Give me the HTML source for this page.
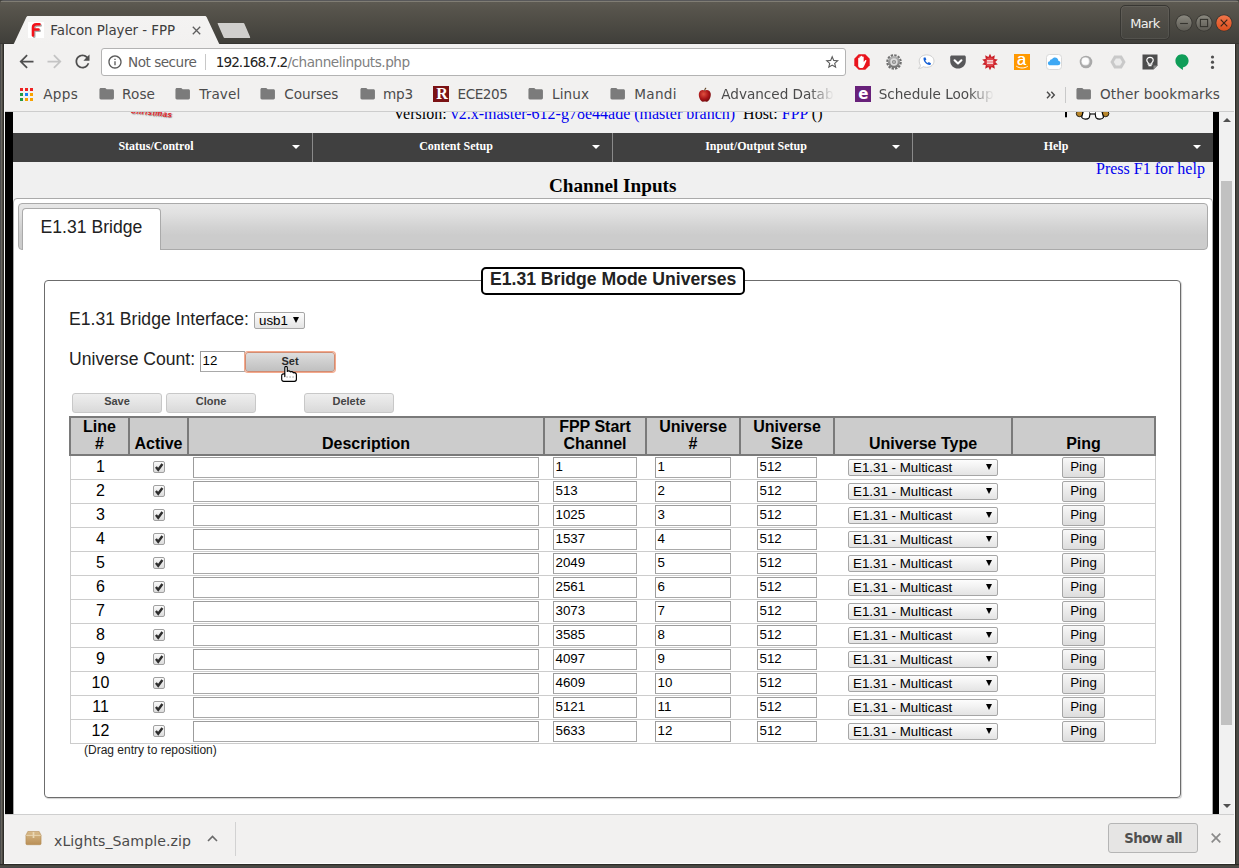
<!DOCTYPE html>
<html lang="en"><head><meta charset="utf-8"><title>Falcon Player - FPP</title>
<style>
*{box-sizing:border-box;margin:0;padding:0}
html,body{width:1239px;height:868px;overflow:hidden;background:#403f3a}
body{position:relative;font-family:'Liberation Sans',Arial,sans-serif}
.a{position:absolute}
.t{position:absolute;white-space:pre;line-height:1}
.ui{font-family:'DejaVu Sans','Liberation Sans',sans-serif;font-size:13.3px;color:#4a4a4a}
#titlebar{left:0;top:0;width:1239px;height:44px;background:linear-gradient(#58585a 0,#58585a 1px,#807d74 1px,#807d74 2px,#5d5a52 2px,#57544c 20%,#403f3a 97%,#2f2e2b 100%);border-radius:4px 4px 0 0}
#toolbar{left:4px;top:44px;width:1231px;height:68px;background:#f2f1f0}
#tline{left:4px;top:111px;width:1230px;height:1px;background:#cdcdcd}
#lstrip{left:4px;top:44px;width:1px;height:820px;background:#f6f6f5}
#rstrip{left:1234px;top:44px;width:1px;height:820px;background:#fbfbfb}
#bstrip{left:4px;top:863px;width:1231px;height:1px;background:#fdfdfd}
#fl{left:0;top:44px;width:4px;height:824px;background:linear-gradient(90deg,#4b4b4b 0,#4b4b4b 1px,#67655e 1px,#67655e 2px,#4a4842 2px,#4a4842 3px,#2e2d29 3px)}
#fr{left:1235px;top:44px;width:4px;height:824px;background:linear-gradient(90deg,#2b2a26 0,#2b2a26 1px,#45443e 1px,#45443e 2px,#4d4b44 2px,#4d4b44 3px,#454545 3px)}
#fb{left:0;top:864px;width:1239px;height:4px;background:linear-gradient(#2b2a26 0,#2b2a26 1px,#45443e 1px,#45443e 2px,#4d4b44 2px,#4d4b44 3px,#464646 3px)}
.blk{position:absolute;top:0;height:703px;background:#000}
#omni{left:101px;top:48px;width:745px;height:28px;background:#fff;border:1px solid #b3b3b3;border-radius:3px}
#view{left:5px;top:111px;width:1214px;height:703px;background:#000;overflow:hidden}
#sb{left:1219px;top:112px;width:15px;height:702px;background:#f1f1f1}
#shelf{left:4px;top:814px;width:1231px;height:49px;background:#f2f1f0;border-top:1px solid #cfcfcf}
#col{left:8px;top:0;width:1200px;height:703px;background:#f0f0f0}
#nav{left:8px;top:22px;width:1200px;height:29px;background:#404040}
.navi{position:absolute;top:-1px;height:29px;width:300px;color:#fff;font:bold 12px/29px 'Liberation Serif','Times New Roman',serif;text-align:center}
.navi i{position:absolute;right:13px;top:13px;width:0;height:0;border:4px solid transparent;border-top:4px solid #fff;border-bottom:0}
.navsep{position:absolute;top:0;width:1px;height:29px;background:#8a8a8a}
#tabs{left:8px;top:87px;width:1200px;height:700px;background:#fff;border:1px solid #aaa;border-radius:4px}
#tabnav{left:13px;top:92px;width:1190px;height:47px;background:linear-gradient(#e7e7e7 0,#e1e1e1 20%,#d3d3d3 50%,#cccccc 70%,#cccccc 100%);border:1px solid #aaa;border-radius:4px}
#tab{left:17px;top:97px;width:139px;height:42px;background:#fff;border:1px solid #aaa;border-bottom:0;border-radius:4px 4px 0 0}
#fs{left:39px;top:169px;width:1137px;height:518px;border:1px solid #6c6c6c;border-radius:4px;box-shadow:1px 1px 1px rgba(0,0,0,.18)}
#legend{left:476px;top:156px;width:264px;height:28px;background:#fff;border:2px solid #000;border-radius:5px}
.btn{position:absolute;height:20px;border:1px solid #c8c8c8;border-radius:3px;background:linear-gradient(#eeeeee,#e4e4e4 50%,#d9d9d9);color:#444;font:bold 11px/14px 'Liberation Sans',Arial,sans-serif;text-align:center}
.inp{position:absolute;height:21px;background:#fff;border:1px solid #a9a9a9;border-top-color:#9c9c9c;border-left-color:#9c9c9c;font:13.33px/18px 'Liberation Sans',Arial,sans-serif;color:#000;padding-left:1.5px;white-space:pre}
.sel{position:absolute;height:17px;border:1px solid #a6a6a6;border-radius:2px;background:linear-gradient(#fdfdfd,#e4e4e4);font:13.33px/15px 'Liberation Sans',Arial,sans-serif;color:#000;padding-left:4px;white-space:pre}
.sel i{position:absolute;right:5px;top:4px;width:0;height:0;border:3.5px solid transparent;border-top:6px solid #000;border-bottom:0}
.ping{position:absolute;height:21px;width:43px;border:1px solid #a6a6a6;border-radius:2px;background:linear-gradient(#f8f8f8,#dddddd);font:13.33px/17px 'Liberation Sans',Arial,sans-serif;color:#000;text-align:center}
.cb{position:absolute;width:12px;height:12px;border:1px solid #a0a0a0;border-radius:2px;background:linear-gradient(#fafafa,#dcdcdc)}
.row{position:absolute;left:65px;width:1086px;height:24px;border-bottom:1px solid #ccc;border-left:1px solid #ccc;border-right:1px solid #ccc}
.num{position:absolute;left:0;width:59px;top:0;text-align:center;font:16px/22px 'Liberation Sans',Arial,sans-serif;color:#000}
#th{left:64px;top:305px;width:1087px;height:40px;background:#ccc;border:2px solid #7a7a7a}
.th{position:absolute;top:0;height:36px;border-left:2px solid #7a7a7a;font:bold 16px/17px 'Liberation Sans',Arial,sans-serif;color:#000;text-align:center;display:flex;align-items:flex-end;justify-content:center;padding-bottom:2px}

.ic{position:absolute;overflow:visible}
</style></head>
<body>
<div class="a" id="titlebar"></div>
<div class="a" id="toolbar"></div>
<div class="a" id="omni"></div>
<div class="a" id="view">
<div class="a" id="col"></div>
<div class="a" id="nav">
<div class="navi" style="left:0px"><span style="position:relative;left:-7px">Status/Control</span><i style="right:13px"></i></div>
<div class="navi" style="left:300px"><span style="position:relative;left:-7px">Content Setup</span><i style="right:13px"></i></div>
<div class="navsep" style="left:299px"></div>
<div class="navi" style="left:600px"><span style="position:relative;left:-7px">Input/Output Setup</span><i style="right:13px"></i></div>
<div class="navsep" style="left:599px"></div>
<div class="navi" style="left:900px"><span style="position:relative;left:-7px">Help</span><i style="right:12px"></i></div>
<div class="navsep" style="left:899px"></div>
</div>
<div class="t" style="left:544px;top:64px;font:bold 19.2px/22px 'Liberation Serif','Times New Roman',serif;color:#000">Channel Inputs</div>
<div class="t" style="left:1091px;top:49px;font:16px/18px 'Liberation Serif','Times New Roman',serif;color:#0000ee">Press F1 for help</div>
<div class="t" style="left:124.5px;top:-5.5px;font:italic bold 8px/10px 'Liberation Sans',Arial,sans-serif;letter-spacing:.3px;color:#e3191f;text-shadow:.8px .8px 1px rgba(90,90,90,.7);transform:rotate(6deg);transform-origin:0 100%">Christmas</div>
<svg class="a" style="left:1055px;top:0" width="55" height="12" viewBox="0 0 55 12"><rect x="5" y="0" width="2" height="6.3" fill="#000"/><ellipse cx="19.6" cy="2.6" rx="3.3" ry="3.1" fill="#b8862b" stroke="#000" stroke-width=".8"/><ellipse cx="45.6" cy="2.6" rx="3.3" ry="3.1" fill="#b8862b" stroke="#000" stroke-width=".8"/><path d="M23.6 -1 C22.8 3 21.5 5.5 21.8 6.6 C23 8.7 27.5 8.6 29 6.8 C30.2 5.2 30 2 30 -1 Z" fill="#fff" stroke="#000" stroke-width="1.1"/><path d="M41.6 -1 C42.4 3 43.7 5.5 43.4 6.6 C42.2 8.7 37.7 8.6 36.2 6.8 C35 5.2 35.2 2 35.2 -1 Z" fill="#fff" stroke="#000" stroke-width="1.1"/><rect x="30" y="0" width="5.2" height="2.4" fill="#fff"/><path d="M30 3 L35.2 3" stroke="#000" stroke-width="1.1"/></svg>
<div class="t" style="left:388.3px;top:-6.2px;font:16px/18px 'Liberation Serif','Times New Roman',serif;color:#000">Version: <span style="color:#0000ee">v2.x-master-612-g78e44ade (master branch)</span>  Host: <span style="color:#0000ee">FPP</span> ()</div>
<div class="a" id="tabs"></div>
<div class="a" id="tabnav"></div>
<div class="a" id="tab"></div>
<div class="blk" style="left:0;width:8px"></div><div class="blk" style="left:1208px;width:6px"></div>
<div class="t" style="left:35.6px;top:105.6px;font:17.6px/20px 'Liberation Sans',Arial,sans-serif;color:#212121">E1.31 Bridge</div>
<div class="a" id="fs"></div>
<div class="a" id="legend"></div>
<div class="t" style="left:485px;top:158px;font:bold 17.6px/20px 'Liberation Sans',Arial,sans-serif;color:#222">E1.31 Bridge Mode Universes</div>
<div class="t" style="left:64px;top:198px;font:17.6px/20px 'Liberation Sans',Arial,sans-serif;color:#222">E1.31 Bridge Interface:</div>
<div class="sel" style="left:249px;top:201px;width:51px">usb1<i></i></div>
<div class="t" style="left:64px;top:238px;font:17.6px/20px 'Liberation Sans',Arial,sans-serif;color:#222">Universe Count:</div>
<div class="inp" style="left:195px;top:240px;width:45px">12</div>
<div class="btn" style="left:240px;top:241px;width:90px;height:20px;border:1px solid #d18c72;box-shadow:0 0 0 1px #f4a98c;background:linear-gradient(#dedede,#cecece 50%,#c0c0c0);color:#2a2a2a;line-height:17px">Set</div>
<svg class="a" style="left:276px;top:255px" width="17" height="17" viewBox="0 0 17 17"><path d="M3.8 10.6 L3.8 1.8 C3.8 -0.1 6.3 -0.1 6.3 1.8 L6.3 5.4 C7.1 4.5 8.8 4.6 9.3 5.9 C10.1 5.3 11.8 5.5 12.3 6.8 C13.3 6.3 15.4 6.8 15.4 8.8 L15.4 13.3 C15.4 14.6 14.6 15.3 13.4 15.3 L2.7 15.3 C1.5 15.3 0.7 14.6 0.7 13.3 L0.7 9.4 C0.7 8.1 2 7.7 3.8 8 Z" fill="#fff" stroke="#000" stroke-width="1.15" stroke-linejoin="round"/><path d="M5.2 11 L7 11 M8.2 11 L10 11 M11.2 11 L13 11" stroke="#8a8a8a" stroke-width=".7"/></svg>
<div class="btn" style="left:67px;top:282px;width:90px">Save</div>
<div class="btn" style="left:161px;top:282px;width:90px">Clone</div>
<div class="btn" style="left:299px;top:282px;width:90px">Delete</div>
<div class="a" id="th">
<div class="th" style="left:0px;width:57px;border-left:0;"><span>Line<br>#</span></div>
<div class="th" style="left:57px;width:59px;"><span>Active</span></div>
<div class="th" style="left:116px;width:356px;"><span>Description</span></div>
<div class="th" style="left:472px;width:102px;"><span>FPP Start<br>Channel</span></div>
<div class="th" style="left:574px;width:94px;"><span>Universe<br>#</span></div>
<div class="th" style="left:668px;width:94px;"><span>Universe<br>Size</span></div>
<div class="th" style="left:762px;width:178px;"><span>Universe Type</span></div>
<div class="th" style="left:940px;width:143px;"><span>Ping</span></div>
</div>
<div class="row" style="top:345px">
<div class="num">1</div>
<div class="cb" style="left:82px;top:5px"><svg width="10" height="10" viewBox="0 0 10 10" style="position:absolute;left:0;top:0"><path d="M1.9 5 L4.2 7.7 L8.4 2" fill="none" stroke="#2e2e2e" stroke-width="2.4"/></svg></div>
<div class="inp" style="left:122px;top:1px;width:346px"></div>
<div class="inp" style="left:482px;top:1px;width:84px">1</div>
<div class="inp" style="left:584px;top:1px;width:76px">1</div>
<div class="inp" style="left:686px;top:1px;width:60px">512</div>
<div class="sel" style="left:777px;top:3px;width:150px">E1.31 - Multicast<i></i></div>
<div class="ping" style="left:991px;top:1px">Ping</div>
</div>
<div class="row" style="top:369px">
<div class="num">2</div>
<div class="cb" style="left:82px;top:5px"><svg width="10" height="10" viewBox="0 0 10 10" style="position:absolute;left:0;top:0"><path d="M1.9 5 L4.2 7.7 L8.4 2" fill="none" stroke="#2e2e2e" stroke-width="2.4"/></svg></div>
<div class="inp" style="left:122px;top:1px;width:346px"></div>
<div class="inp" style="left:482px;top:1px;width:84px">513</div>
<div class="inp" style="left:584px;top:1px;width:76px">2</div>
<div class="inp" style="left:686px;top:1px;width:60px">512</div>
<div class="sel" style="left:777px;top:3px;width:150px">E1.31 - Multicast<i></i></div>
<div class="ping" style="left:991px;top:1px">Ping</div>
</div>
<div class="row" style="top:393px">
<div class="num">3</div>
<div class="cb" style="left:82px;top:5px"><svg width="10" height="10" viewBox="0 0 10 10" style="position:absolute;left:0;top:0"><path d="M1.9 5 L4.2 7.7 L8.4 2" fill="none" stroke="#2e2e2e" stroke-width="2.4"/></svg></div>
<div class="inp" style="left:122px;top:1px;width:346px"></div>
<div class="inp" style="left:482px;top:1px;width:84px">1025</div>
<div class="inp" style="left:584px;top:1px;width:76px">3</div>
<div class="inp" style="left:686px;top:1px;width:60px">512</div>
<div class="sel" style="left:777px;top:3px;width:150px">E1.31 - Multicast<i></i></div>
<div class="ping" style="left:991px;top:1px">Ping</div>
</div>
<div class="row" style="top:417px">
<div class="num">4</div>
<div class="cb" style="left:82px;top:5px"><svg width="10" height="10" viewBox="0 0 10 10" style="position:absolute;left:0;top:0"><path d="M1.9 5 L4.2 7.7 L8.4 2" fill="none" stroke="#2e2e2e" stroke-width="2.4"/></svg></div>
<div class="inp" style="left:122px;top:1px;width:346px"></div>
<div class="inp" style="left:482px;top:1px;width:84px">1537</div>
<div class="inp" style="left:584px;top:1px;width:76px">4</div>
<div class="inp" style="left:686px;top:1px;width:60px">512</div>
<div class="sel" style="left:777px;top:3px;width:150px">E1.31 - Multicast<i></i></div>
<div class="ping" style="left:991px;top:1px">Ping</div>
</div>
<div class="row" style="top:441px">
<div class="num">5</div>
<div class="cb" style="left:82px;top:5px"><svg width="10" height="10" viewBox="0 0 10 10" style="position:absolute;left:0;top:0"><path d="M1.9 5 L4.2 7.7 L8.4 2" fill="none" stroke="#2e2e2e" stroke-width="2.4"/></svg></div>
<div class="inp" style="left:122px;top:1px;width:346px"></div>
<div class="inp" style="left:482px;top:1px;width:84px">2049</div>
<div class="inp" style="left:584px;top:1px;width:76px">5</div>
<div class="inp" style="left:686px;top:1px;width:60px">512</div>
<div class="sel" style="left:777px;top:3px;width:150px">E1.31 - Multicast<i></i></div>
<div class="ping" style="left:991px;top:1px">Ping</div>
</div>
<div class="row" style="top:465px">
<div class="num">6</div>
<div class="cb" style="left:82px;top:5px"><svg width="10" height="10" viewBox="0 0 10 10" style="position:absolute;left:0;top:0"><path d="M1.9 5 L4.2 7.7 L8.4 2" fill="none" stroke="#2e2e2e" stroke-width="2.4"/></svg></div>
<div class="inp" style="left:122px;top:1px;width:346px"></div>
<div class="inp" style="left:482px;top:1px;width:84px">2561</div>
<div class="inp" style="left:584px;top:1px;width:76px">6</div>
<div class="inp" style="left:686px;top:1px;width:60px">512</div>
<div class="sel" style="left:777px;top:3px;width:150px">E1.31 - Multicast<i></i></div>
<div class="ping" style="left:991px;top:1px">Ping</div>
</div>
<div class="row" style="top:489px">
<div class="num">7</div>
<div class="cb" style="left:82px;top:5px"><svg width="10" height="10" viewBox="0 0 10 10" style="position:absolute;left:0;top:0"><path d="M1.9 5 L4.2 7.7 L8.4 2" fill="none" stroke="#2e2e2e" stroke-width="2.4"/></svg></div>
<div class="inp" style="left:122px;top:1px;width:346px"></div>
<div class="inp" style="left:482px;top:1px;width:84px">3073</div>
<div class="inp" style="left:584px;top:1px;width:76px">7</div>
<div class="inp" style="left:686px;top:1px;width:60px">512</div>
<div class="sel" style="left:777px;top:3px;width:150px">E1.31 - Multicast<i></i></div>
<div class="ping" style="left:991px;top:1px">Ping</div>
</div>
<div class="row" style="top:513px">
<div class="num">8</div>
<div class="cb" style="left:82px;top:5px"><svg width="10" height="10" viewBox="0 0 10 10" style="position:absolute;left:0;top:0"><path d="M1.9 5 L4.2 7.7 L8.4 2" fill="none" stroke="#2e2e2e" stroke-width="2.4"/></svg></div>
<div class="inp" style="left:122px;top:1px;width:346px"></div>
<div class="inp" style="left:482px;top:1px;width:84px">3585</div>
<div class="inp" style="left:584px;top:1px;width:76px">8</div>
<div class="inp" style="left:686px;top:1px;width:60px">512</div>
<div class="sel" style="left:777px;top:3px;width:150px">E1.31 - Multicast<i></i></div>
<div class="ping" style="left:991px;top:1px">Ping</div>
</div>
<div class="row" style="top:537px">
<div class="num">9</div>
<div class="cb" style="left:82px;top:5px"><svg width="10" height="10" viewBox="0 0 10 10" style="position:absolute;left:0;top:0"><path d="M1.9 5 L4.2 7.7 L8.4 2" fill="none" stroke="#2e2e2e" stroke-width="2.4"/></svg></div>
<div class="inp" style="left:122px;top:1px;width:346px"></div>
<div class="inp" style="left:482px;top:1px;width:84px">4097</div>
<div class="inp" style="left:584px;top:1px;width:76px">9</div>
<div class="inp" style="left:686px;top:1px;width:60px">512</div>
<div class="sel" style="left:777px;top:3px;width:150px">E1.31 - Multicast<i></i></div>
<div class="ping" style="left:991px;top:1px">Ping</div>
</div>
<div class="row" style="top:561px">
<div class="num">10</div>
<div class="cb" style="left:82px;top:5px"><svg width="10" height="10" viewBox="0 0 10 10" style="position:absolute;left:0;top:0"><path d="M1.9 5 L4.2 7.7 L8.4 2" fill="none" stroke="#2e2e2e" stroke-width="2.4"/></svg></div>
<div class="inp" style="left:122px;top:1px;width:346px"></div>
<div class="inp" style="left:482px;top:1px;width:84px">4609</div>
<div class="inp" style="left:584px;top:1px;width:76px">10</div>
<div class="inp" style="left:686px;top:1px;width:60px">512</div>
<div class="sel" style="left:777px;top:3px;width:150px">E1.31 - Multicast<i></i></div>
<div class="ping" style="left:991px;top:1px">Ping</div>
</div>
<div class="row" style="top:585px">
<div class="num">11</div>
<div class="cb" style="left:82px;top:5px"><svg width="10" height="10" viewBox="0 0 10 10" style="position:absolute;left:0;top:0"><path d="M1.9 5 L4.2 7.7 L8.4 2" fill="none" stroke="#2e2e2e" stroke-width="2.4"/></svg></div>
<div class="inp" style="left:122px;top:1px;width:346px"></div>
<div class="inp" style="left:482px;top:1px;width:84px">5121</div>
<div class="inp" style="left:584px;top:1px;width:76px">11</div>
<div class="inp" style="left:686px;top:1px;width:60px">512</div>
<div class="sel" style="left:777px;top:3px;width:150px">E1.31 - Multicast<i></i></div>
<div class="ping" style="left:991px;top:1px">Ping</div>
</div>
<div class="row" style="top:609px">
<div class="num">12</div>
<div class="cb" style="left:82px;top:5px"><svg width="10" height="10" viewBox="0 0 10 10" style="position:absolute;left:0;top:0"><path d="M1.9 5 L4.2 7.7 L8.4 2" fill="none" stroke="#2e2e2e" stroke-width="2.4"/></svg></div>
<div class="inp" style="left:122px;top:1px;width:346px"></div>
<div class="inp" style="left:482px;top:1px;width:84px">5633</div>
<div class="inp" style="left:584px;top:1px;width:76px">12</div>
<div class="inp" style="left:686px;top:1px;width:60px">512</div>
<div class="sel" style="left:777px;top:3px;width:150px">E1.31 - Multicast<i></i></div>
<div class="ping" style="left:991px;top:1px">Ping</div>
</div>
<div class="t" style="left:79px;top:632px;font:12px/14px 'Liberation Sans',Arial,sans-serif;color:#222">(Drag entry to reposition)</div>
</div>
<div class="a" id="tline"></div>
<div class="a" id="sb"></div>
<div class="a" id="shelf"></div>
<div class="a" id="fl"></div><div class="a" id="fr"></div><div class="a" id="fb"></div><div class="a" id="lstrip"></div><div class="a" id="rstrip"></div><div class="a" id="bstrip"></div>
<svg class="ic" style="left:0px;top:0px;" width="1239" height="46" viewBox="0 0 1239 46"><defs><linearGradient id="tg" x1="0" y1="0" x2="0" y2="1"><stop offset="0" stop-color="#f4f3f2"/><stop offset="1" stop-color="#f2f1f0"/></linearGradient></defs><path d="M13 44.5 L14 43.6 L26.3 17.2 C26.8 16.3 27.3 16 28.3 16 L204.7 16 C205.7 16 206.2 16.3 206.7 17.2 L219 43.6 L220 44.5 Z" fill="url(#tg)"/><path d="M218.3 23 L243 23 C243.8 23 244.2 23.3 244.5 24 L250 36.8 C250.4 37.6 250.1 38 249.3 38 L225 38 C224.2 38 223.8 37.7 223.5 37 L217.8 24 C217.5 23.3 217.6 23 218.3 23 Z" fill="#d0cfcd"/></svg>
<div class="a" style="left:28px;top:22px;width:16px;height:16px;background:#fff"></div>
<svg class="ic" style="left:28px;top:22px;" width="16" height="16" viewBox="0 0 16 16"><path d="M5 13.5 L5 5.5 C5 3.3 6.3 2.3 8.3 2.3 L11.5 2.3 M5 7.5 L10.5 7.5" fill="none" stroke="#8a8a8a" stroke-width="2.6" stroke-linecap="round" transform="translate(1.2,1.2)" opacity=".7"/><path d="M5 13.5 L5 5.5 C5 3.3 6.3 2.3 8.3 2.3 L11.5 2.3 M5 7.5 L10.5 7.5" fill="none" stroke="#f4121a" stroke-width="2.6" stroke-linecap="round"/></svg>
<div class="t" style="left:50.3px;top:24.0px;font-family:'DejaVu Sans','Liberation Sans',sans-serif;font-size:13.4px;font-weight:400;letter-spacing:-0.045px;color:#3e3e3e;">Falcon Player - FPP</div>
<svg class="ic" style="left:192.4px;top:25.5px;" width="9" height="9" viewBox="0 0 9 9"><path d="M0.8 0.8 L8.2 8.2 M8.2 0.8 L0.8 8.2" stroke="#5e5e5e" stroke-width="1.3" fill="none"/></svg>
<div class="a" style="left:1120px;top:5px;width:50px;height:35px;border:1px solid #383733;border-radius:5px;background:linear-gradient(#57544d,#45443f);box-shadow:inset 0 0 0 1px rgba(255,255,255,.07)"></div>
<div class="t" style="left:1130.3px;top:17.1px;font-family:'DejaVu Sans','Liberation Sans',sans-serif;font-size:13px;font-weight:400;letter-spacing:-0.691px;color:#f1f1ef;">Mark</div>
<svg width="0" height="0" style="position:absolute"><defs><linearGradient id="wg" x1="0" y1="0" x2="0" y2="1"><stop offset="0" stop-color="#8a887f"/><stop offset="1" stop-color="#5d5b54"/></linearGradient><linearGradient id="wr" x1="0" y1="0" x2="0" y2="1"><stop offset="0" stop-color="#f0754a"/><stop offset="1" stop-color="#dc4f1e"/></linearGradient></defs></svg>
<svg class="ic" style="left:1175.2px;top:13.9px;" width="18" height="18" viewBox="-0.5 -0.5 18 18"><circle cx="8.5" cy="8.5" r="8.5" fill="#34332f"/><circle cx="8.5" cy="8.5" r="7.7" fill="url(#wg)"/><path d="M4.6 9 L12.4 9" stroke="#35342f" stroke-width="1.1"/></svg>
<svg class="ic" style="left:1195px;top:13.9px;" width="18" height="18" viewBox="-0.5 -0.5 18 18"><circle cx="8.5" cy="8.5" r="8.5" fill="#34332f"/><circle cx="8.5" cy="8.5" r="7.7" fill="url(#wg)"/><rect x="4.9" y="4.9" width="7.2" height="7.2" fill="none" stroke="#35342f" stroke-width="1.1"/></svg>
<svg class="ic" style="left:1215.2px;top:13.9px;" width="18" height="18" viewBox="-0.5 -0.5 18 18"><circle cx="8.5" cy="8.5" r="8.5" fill="#34332f"/><circle cx="8.5" cy="8.5" r="7.7" fill="url(#wr)"/><path d="M5.2 5.2 L11.8 11.8 M11.8 5.2 L5.2 11.8" stroke="#3a2418" stroke-width="1.2"/></svg>
<svg class="ic" style="left:16px;top:51.2px;" width="21" height="21" viewBox="0 0 24 24"><path d="M20 11H7.83l5.59-5.59L12 4l-8 8 8 8 1.41-1.41L7.83 13H20v-2z" fill="#4f4f4f"/></svg>
<svg class="ic" style="left:44px;top:51.2px;" width="21" height="21" viewBox="0 0 24 24"><path d="M12 4l-1.41 1.41L16.17 11H4v2h12.17l-5.58 5.59L12 20l8-8z" fill="#c4c4c4"/></svg>
<svg class="ic" style="left:72.2px;top:51.2px;" width="21" height="21" viewBox="0 0 24 24"><path d="M17.65 6.35C16.2 4.9 14.21 4 12 4c-4.42 0-7.99 3.58-7.99 8s3.57 8 7.99 8c3.73 0 6.84-2.55 7.73-6h-2.08c-.82 2.33-3.04 4-5.65 4-3.31 0-6-2.69-6-6s2.69-6 6-6c1.66 0 3.14.69 4.22 1.78L13 11h7V4l-2.35 2.35z" fill="#4f4f4f"/></svg>
<svg class="ic" style="left:107px;top:54px;" width="16" height="16" viewBox="0 0 24 24"><path d="M11 17h2v-6h-2v6zm1-15C6.48 2 2 6.48 2 12s4.48 10 10 10 10-4.48 10-10S17.52 2 12 2zm0 18c-4.41 0-8-3.59-8-8s3.59-8 8-8 8 3.59 8 8-3.59 8-8 8zM11 9h2V7h-2v2z" fill="#5a5a5a"/></svg>
<div class="t" style="left:128.0px;top:56.0px;font-family:'DejaVu Sans','Liberation Sans',sans-serif;font-size:13.6px;font-weight:400;letter-spacing:-0.493px;color:#5f5f5f;">Not secure</div>
<div class="a" style="left:205px;top:54px;width:1px;height:16px;background:#c8c8c8"></div>
<div class="t" style="left:215.8px;top:56.0px;font-family:'DejaVu Sans','Liberation Sans',sans-serif;font-size:13.6px;font-weight:400;letter-spacing:-0.978px;color:#222;">192.168.7.2</div>
<div class="t" style="left:287.4px;top:56.0px;font-family:'DejaVu Sans','Liberation Sans',sans-serif;font-size:13.6px;font-weight:400;letter-spacing:-0.462px;color:#808080;">/channelinputs.php</div>
<svg class="ic" style="left:824px;top:53.8px;" width="16.4" height="16.4" viewBox="0 0 24 24"><path d="M22 9.24l-7.19-.62L12 2 9.19 8.63 2 9.24l5.46 4.73L5.82 21 12 17.27 18.18 21l-1.63-7.03L22 9.24zM12 15.4l-3.76 2.27 1-4.28-3.32-2.88 4.38-.38L12 6.1l1.71 4.04 4.38.38-3.32 2.88 1 4.28L12 15.4z" fill="#5a5a5a"/></svg>
<svg class="ic" style="left:854px;top:54px;" width="16" height="16" viewBox="0 0 16 16"><path d="M4.7 0.3 L11.3 0.3 L15.7 4.7 L15.7 11.3 L11.3 15.7 L4.7 15.7 L0.3 11.3 L0.3 4.7 Z" fill="#e9141d"/><path d="M4.2 9 L4.2 4.4 C4.2 3.5 5.5 3.5 5.5 4.4 L5.5 3 C5.5 2.1 6.9 2.1 6.9 3 L6.9 2.5 C6.9 1.6 8.3 1.6 8.3 2.5 L8.3 3.1 C8.3 2.2 9.7 2.2 9.7 3.1 L9.7 8 L11 6.4 C11.7 5.7 12.8 6.4 12.3 7.3 L10 12.2 C9.5 13.4 8.8 14 7.8 14 L6.4 14 C5 14 4.2 13 4.2 11.6 Z" fill="#fff"/></svg>
<svg class="ic" style="left:886px;top:54px;" width="16" height="16" viewBox="0 0 16 16"><defs><linearGradient id="gg" x1="0" y1="0" x2="0" y2="1"><stop offset="0" stop-color="#b9b9b9"/><stop offset="1" stop-color="#6f6f6f"/></linearGradient></defs><circle cx="8" cy="8" r="6.6" fill="none" stroke="#6e6e6e" stroke-width="2.4" stroke-dasharray="2.3 1.16"/><circle cx="8" cy="8" r="6.1" fill="url(#gg)"/><circle cx="8" cy="8" r="3.7" fill="#dcdcdc"/><circle cx="8" cy="8" r="2.1" fill="#8d8d8d"/><circle cx="8" cy="8" r="1" fill="#bdbdbd"/></svg>
<svg class="ic" style="left:918px;top:54px;" width="16" height="16" viewBox="0 0 16 16"><path d="M8.6 0.9 C13 0.9 16 3.6 16 7.1 C16 10.6 13 13.3 8.6 13.3 C7.4 13.3 6.2 13.1 5.2 12.7 C4 13.9 2.4 14.4 0.5 14.3 C1.7 13.5 2.3 12.5 2.4 11.3 C1.6 10.1 1.2 8.7 1.2 7.1 C1.2 3.6 4.2 0.9 8.6 0.9 Z" fill="#fff" stroke="#c9c9c9" stroke-width=".9"/><path d="M5.6 3.8 L7.3 3.2 L8.4 5.6 L7.3 6.5 C7.8 7.6 8.6 8.5 9.8 9 L10.7 8 L13 9.2 L12.4 10.9 C8.9 11.7 4.8 7.5 5.6 3.8 Z" fill="#1560d6"/></svg>
<svg class="ic" style="left:950px;top:54px;" width="16" height="16" viewBox="0 0 16 16"><path d="M1.8 1.6 L14.2 1.6 C15.2 1.6 15.8 2.2 15.8 3.2 L15.8 7 C15.8 11.3 12.3 14.6 8 14.6 C3.7 14.6 0.2 11.3 0.2 7 L0.2 3.2 C0.2 2.2 0.8 1.6 1.8 1.6 Z" fill="#58585a"/><path d="M4.6 6.3 L8 9.5 L11.4 6.3" fill="none" stroke="#fff" stroke-width="2.1" stroke-linecap="round" stroke-linejoin="round"/></svg>
<svg class="ic" style="left:982px;top:54px;" width="16" height="16" viewBox="0 0 16 16"><polygon points="8.00,-0.20 9.61,3.05 12.82,1.37 12.21,4.94 15.80,5.47 13.20,8.00 15.80,10.53 12.21,11.06 12.82,14.63 9.61,12.95 8.00,16.20 6.39,12.95 3.18,14.63 3.79,11.06 0.20,10.53 2.80,8.00 0.20,5.47 3.79,4.94 3.18,1.37 6.39,3.05" fill="#c81e25"/><circle cx="8" cy="8" r="4.6" fill="#e0434a"/><path d="M5 6.9 L11 6.9 M5 9.1 L11 9.1" stroke="#fff" stroke-width="1.1"/></svg>
<div class="a" style="left:1014px;top:54px;width:16px;height:16px;background:#ff9900"></div>
<div class="t" style="left:1017.1px;top:50.6px;font-family:'Liberation Sans',sans-serif;font-weight:normal;font-size:16.5px;color:#fff;text-shadow:0 0 .4px #fff">a</div>
<svg class="ic" style="left:1014px;top:54px;" width="16" height="16" viewBox="0 0 16 16"><path d="M2.6 12.4 C6 14.6 10.4 14.5 13.4 12.5" fill="none" stroke="#fff" stroke-width="1" stroke-linecap="round"/></svg>
<svg class="ic" style="left:1046px;top:54px;" width="16" height="16" viewBox="0 0 16 16"><rect x="0.5" y="0.5" width="15" height="15" rx="3" fill="#fff" stroke="#d9d9d9"/><path d="M4.3 11.3 C2.8 11.3 1.9 10.3 1.9 9.2 C1.9 8.1 2.7 7.3 3.8 7.2 C3.9 5.9 4.9 5.1 6 5.3 C6.6 4.1 7.7 3.5 9 3.5 C10.9 3.5 12.3 4.9 12.3 6.8 C13.5 6.9 14.3 7.8 14.3 9 C14.3 10.3 13.3 11.3 12 11.3 Z" fill="#3ea8f4"/></svg>
<svg class="ic" style="left:1078px;top:54px;" width="16" height="16" viewBox="0 0 16 16"><circle cx="8" cy="8" r="6.3" fill="#a9a9a9"/><circle cx="7.5" cy="7.4" r="4.1" fill="#e4e4e4"/><circle cx="7.3" cy="7.2" r="3.4" fill="#fdfdfd"/></svg>
<svg class="ic" style="left:1110px;top:54px;" width="16" height="16" viewBox="0 0 16 16"><path d="M4.2 1.6 L11.8 1.6 L15.6 8 L11.8 14.4 L4.2 14.4 L0.4 8 Z" fill="#c9c9c9"/><path d="M5.9 4.4 L10.1 4.4 L12.2 8 L10.1 11.6 L5.9 11.6 L3.8 8 Z" fill="#ebebeb"/></svg>
<svg class="ic" style="left:1141.9px;top:54px;" width="16" height="16" viewBox="0 0 16 16"><path d="M0.5 0.5 L15.5 0.5 L15.5 11.5 L11.5 15.5 L0.5 15.5 Z" fill="#4d4d4d"/><path d="M15.5 11.5 L11.5 11.5 L11.5 15.5 Z" fill="#8a8a8a"/><path d="M8 3.3 C10 3.3 11.2 4.7 11.2 6.3 C11.2 7.5 10.6 8.2 9.8 8.9 L9.8 10.2 L6.2 10.2 L6.2 8.9 C5.4 8.2 4.8 7.5 4.8 6.3 C4.8 4.7 6 3.3 8 3.3 Z M6.4 11.6 L9.6 11.6" fill="none" stroke="#fff" stroke-width="1.2"/></svg>
<svg class="ic" style="left:1173.7px;top:54px;" width="16" height="16" viewBox="0 0 16 16"><path d="M8 0.2 C11.8 0.2 14.6 3.1 14.6 6.8 C14.6 10.4 11.8 13 8.9 13.4 L8.9 16 C7.4 15 5.9 13.9 4.8 12.9 C2.7 11.7 1.4 9.4 1.4 6.8 C1.4 3.1 4.2 0.2 8 0.2 Z" fill="#0f9d58"/></svg>
<svg class="ic" style="left:1210px;top:54px;" width="5" height="16" viewBox="0 0 5 16"><circle cx="2.5" cy="3" r="1.6" fill="#4f4f4f"/><circle cx="2.5" cy="8.2" r="1.6" fill="#4f4f4f"/><circle cx="2.5" cy="13.4" r="1.6" fill="#4f4f4f"/></svg>
<svg class="ic" style="left:20px;top:87.5px;" width="13" height="13" viewBox="0 0 13 13"><rect x="0" y="0" width="3" height="3" fill="#ee2222"/><rect x="5" y="0" width="3" height="3" fill="#ee2222"/><rect x="10" y="0" width="3" height="3" fill="#ee2222"/><rect x="0" y="5" width="3" height="3" fill="#229944"/><rect x="5" y="5" width="3" height="3" fill="#1a82f7"/><rect x="10" y="5" width="3" height="3" fill="#f7a200"/><rect x="0" y="10" width="3" height="3" fill="#229944"/><rect x="5" y="10" width="3" height="3" fill="#f7a200"/><rect x="10" y="10" width="3" height="3" fill="#f7a200"/></svg>
<div class="t" style="left:43.3px;top:88.0px;font-family:'DejaVu Sans','Liberation Sans',sans-serif;font-size:13.6px;font-weight:400;letter-spacing:0.265px;color:#4b4b4b;">Apps</div>
<svg class="ic" style="left:97.5px;top:85.2px;" width="17.4" height="17.4" viewBox="0 0 24 24"><path d="M10 4H4c-1.1 0-1.99.9-1.99 2L2 18c0 1.1.9 2 2 2h16c1.1 0 2-.9 2-2V8c0-1.1-.9-2-2-2h-8l-2-2z" fill="#7b7b7b"/></svg>
<div class="t" style="left:122.1px;top:88.0px;font-family:'DejaVu Sans','Liberation Sans',sans-serif;font-size:13.6px;font-weight:400;letter-spacing:0.098px;color:#4b4b4b;">Rose</div>
<svg class="ic" style="left:174.3px;top:85.2px;" width="17.4" height="17.4" viewBox="0 0 24 24"><path d="M10 4H4c-1.1 0-1.99.9-1.99 2L2 18c0 1.1.9 2 2 2h16c1.1 0 2-.9 2-2V8c0-1.1-.9-2-2-2h-8l-2-2z" fill="#7b7b7b"/></svg>
<div class="t" style="left:199.3px;top:88.0px;font-family:'DejaVu Sans','Liberation Sans',sans-serif;font-size:13.6px;font-weight:400;letter-spacing:0.096px;color:#4b4b4b;">Travel</div>
<svg class="ic" style="left:259.40000000000003px;top:85.2px;" width="17.4" height="17.4" viewBox="0 0 24 24"><path d="M10 4H4c-1.1 0-1.99.9-1.99 2L2 18c0 1.1.9 2 2 2h16c1.1 0 2-.9 2-2V8c0-1.1-.9-2-2-2h-8l-2-2z" fill="#7b7b7b"/></svg>
<div class="t" style="left:284.3px;top:88.0px;font-family:'DejaVu Sans','Liberation Sans',sans-serif;font-size:13.6px;font-weight:400;letter-spacing:-0.078px;color:#4b4b4b;">Courses</div>
<svg class="ic" style="left:358.5px;top:85.2px;" width="17.4" height="17.4" viewBox="0 0 24 24"><path d="M10 4H4c-1.1 0-1.99.9-1.99 2L2 18c0 1.1.9 2 2 2h16c1.1 0 2-.9 2-2V8c0-1.1-.9-2-2-2h-8l-2-2z" fill="#7b7b7b"/></svg>
<div class="t" style="left:383.1px;top:88.0px;font-family:'DejaVu Sans','Liberation Sans',sans-serif;font-size:13.6px;font-weight:400;letter-spacing:-0.244px;color:#4b4b4b;">mp3</div>
<div class="a" style="left:433px;top:86px;width:16px;height:16px;background:#7b1214"></div>
<div class="t" style="left:436.2px;top:85.6px;font-family:'Liberation Serif',serif;font-weight:bold;font-size:16px;color:#fff">R</div>
<div class="t" style="left:457.5px;top:88.0px;font-family:'DejaVu Sans','Liberation Sans',sans-serif;font-size:13.6px;font-weight:400;letter-spacing:-0.438px;color:#4b4b4b;">ECE205</div>
<svg class="ic" style="left:527.0999999999999px;top:85.2px;" width="17.4" height="17.4" viewBox="0 0 24 24"><path d="M10 4H4c-1.1 0-1.99.9-1.99 2L2 18c0 1.1.9 2 2 2h16c1.1 0 2-.9 2-2V8c0-1.1-.9-2-2-2h-8l-2-2z" fill="#7b7b7b"/></svg>
<div class="t" style="left:552.0px;top:88.0px;font-family:'DejaVu Sans','Liberation Sans',sans-serif;font-size:13.6px;font-weight:400;letter-spacing:0.132px;color:#4b4b4b;">Linux</div>
<svg class="ic" style="left:609.0999999999999px;top:85.2px;" width="17.4" height="17.4" viewBox="0 0 24 24"><path d="M10 4H4c-1.1 0-1.99.9-1.99 2L2 18c0 1.1.9 2 2 2h16c1.1 0 2-.9 2-2V8c0-1.1-.9-2-2-2h-8l-2-2z" fill="#7b7b7b"/></svg>
<div class="t" style="left:634.3px;top:88.0px;font-family:'DejaVu Sans','Liberation Sans',sans-serif;font-size:13.6px;font-weight:400;letter-spacing:0.281px;color:#4b4b4b;">Mandi</div>
<svg class="ic" style="left:697.2px;top:86.6px;" width="15.6" height="15.6" viewBox="0 0 15 15"><defs><radialGradient id="ap" cx=".4" cy=".35" r=".7"><stop offset="0" stop-color="#e0503f"/><stop offset=".6" stop-color="#a81417"/><stop offset="1" stop-color="#6d0b0d"/></radialGradient></defs><path d="M7.5 3.4 C9 2.2 12.6 2.6 13.2 6.3 C13.7 9.6 11.6 14 9.4 14.2 C8.6 14.3 8.2 14 7.5 14 C6.8 14 6.4 14.3 5.6 14.2 C3.4 14 1.3 9.6 1.8 6.3 C2.4 2.6 6 2.2 7.5 3.4 Z" fill="url(#ap)"/><path d="M7.4 3.6 C7.4 2.4 7.9 1.5 8.8 0.9" stroke="#5a3b1c" stroke-width="1" fill="none"/></svg>
<div class="t" style="left:721.3px;top:88.0px;font-family:'DejaVu Sans','Liberation Sans',sans-serif;font-size:13.6px;font-weight:400;letter-spacing:-0.026px;color:#4b4b4b;-webkit-mask-image:linear-gradient(90deg,#000 78%,transparent 100%);mask-image:linear-gradient(90deg,#000 78%,transparent 100%)">Advanced Datab</div>
<div class="a" style="left:855px;top:86px;width:16px;height:16px;background:#68217a"></div>
<div class="t" style="left:858.2px;top:86.6px;font-family:'DejaVu Sans','Liberation Sans',sans-serif;font-weight:bold;font-size:15px;color:#fff">e</div>
<div class="t" style="left:878.8px;top:88.0px;font-family:'DejaVu Sans','Liberation Sans',sans-serif;font-size:13.6px;font-weight:400;letter-spacing:-0.051px;color:#4b4b4b;-webkit-mask-image:linear-gradient(90deg,#000 78%,transparent 100%);mask-image:linear-gradient(90deg,#000 78%,transparent 100%)">Schedule Lookup</div>
<svg class="ic" style="left:1045.5px;top:90.5px;" width="9.5" height="8" viewBox="0 0 9.5 8"><path d="M1 0.8 L4 4 L1 7.2 M5.3 0.8 L8.3 4 L5.3 7.2" fill="none" stroke="#4a4a4a" stroke-width="1.4"/></svg>
<div class="a" style="left:1065px;top:87px;width:1px;height:16px;background:#c9c9c9"></div>
<svg class="ic" style="left:1074.5px;top:85.2px;" width="17.4" height="17.4" viewBox="0 0 24 24"><path d="M10 4H4c-1.1 0-1.99.9-1.99 2L2 18c0 1.1.9 2 2 2h16c1.1 0 2-.9 2-2V8c0-1.1-.9-2-2-2h-8l-2-2z" fill="#7b7b7b"/></svg>
<div class="t" style="left:1100.0px;top:88.0px;font-family:'DejaVu Sans','Liberation Sans',sans-serif;font-size:13.6px;font-weight:400;letter-spacing:0.122px;color:#4b4b4b;">Other bookmarks</div>
<div class="a" style="left:1221px;top:181px;width:11px;height:544px;background:#c1c1c1"></div>
<svg class="ic" style="left:1222.5px;top:118px;" width="8" height="4" viewBox="0 0 8 4"><path d="M0 4 L4 0 L8 4 Z" fill="#505050"/></svg>
<svg class="ic" style="left:1222.5px;top:804px;" width="8" height="4" viewBox="0 0 8 4"><path d="M0 0 L4 4 L8 0 Z" fill="#505050"/></svg>
<svg class="ic" style="left:25px;top:830.6px;" width="17" height="14.2" viewBox="0 0 17 15"><defs><linearGradient id="bx" x1="0" y1="0" x2="0" y2="1"><stop offset="0" stop-color="#d9bb8a"/><stop offset="1" stop-color="#b98f56"/></linearGradient></defs><path d="M2.5 0.5 L14.5 0.5 L16.5 4.5 L16.5 13.5 C16.5 14 16 14.5 15.5 14.5 L1.5 14.5 C1 14.5 0.5 14 0.5 13.5 L0.5 4.5 Z" fill="url(#bx)" stroke="#b38a52" stroke-width=".6"/><path d="M0.8 4.6 L16.2 4.6" stroke="#ead7b4" stroke-width="1"/><rect x="7.6" y="1" width="1.8" height="6.4" fill="#ead7b4"/></svg>
<div class="t" style="left:54.0px;top:834.0px;font-family:'DejaVu Sans','Liberation Sans',sans-serif;font-size:14.1px;font-weight:400;letter-spacing:0.083px;color:#4a4a4a;">xLights_Sample.zip</div>
<svg class="ic" style="left:207px;top:834.5px;" width="11" height="7" viewBox="0 0 11 7"><path d="M1 6 L5.5 1.5 L10 6" fill="none" stroke="#6a6a6a" stroke-width="1.6"/></svg>
<div class="a" style="left:235px;top:822px;width:1px;height:34px;background:#d2d2d2"></div>
<div class="a" style="left:1108px;top:823px;width:90px;height:30px;border:1px solid #b5b5b5;border-radius:3px;background:#e6e5e4"></div>
<div class="t" style="left:1124.3px;top:832.0px;font-family:'DejaVu Sans','Liberation Sans',sans-serif;font-size:13.2px;font-weight:700;letter-spacing:-0.621px;color:#4f4f4f;">Show all</div>
<svg class="ic" style="left:1211px;top:833px;" width="10" height="10" viewBox="0 0 10 10"><path d="M0.7 0.7 L9.3 9.3 M9.3 0.7 L0.7 9.3" stroke="#8a8a8a" stroke-width="1.7" fill="none"/></svg>
</body></html>
